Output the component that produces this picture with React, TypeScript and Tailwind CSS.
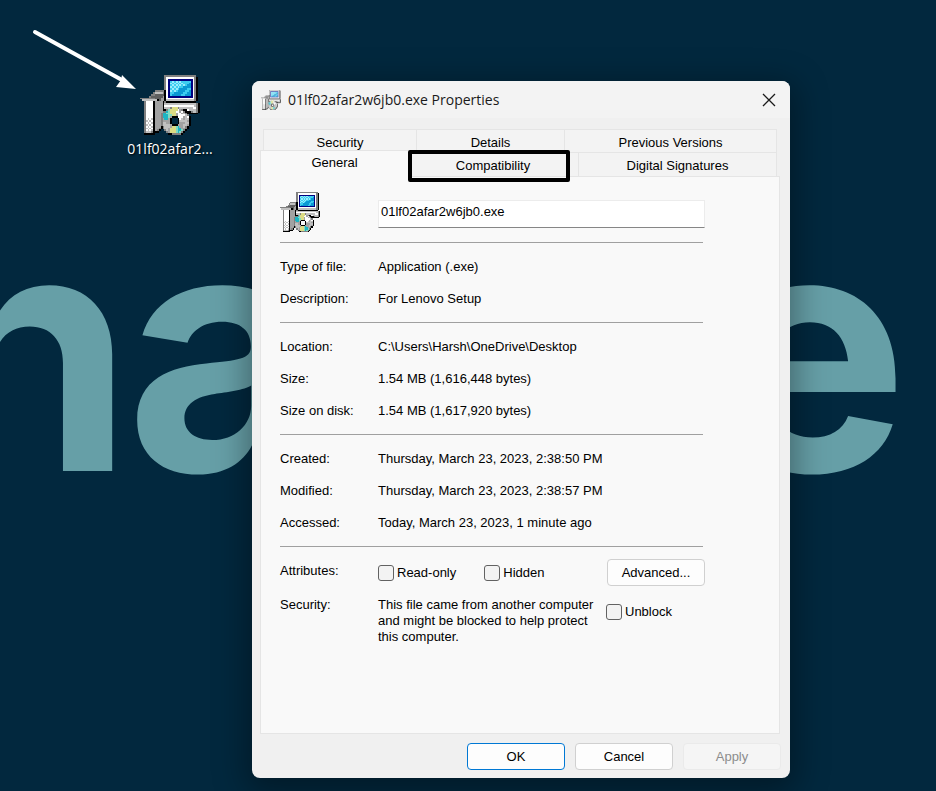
import { useState } from 'react';

const palette: Record<string, string> = {
  g: '#808080',
  d: '#5f5f5f',
  m: '#a2a2a2',
  l: '#c0c0c0',
  w: '#ffffff',
  k: '#000000',
  n: '#000080',
  c: '#1cb4c4',
  a: '#80dcc4',
  y: '#dcdc84',
  s: '#0a98d4',
  t: '#3cccf0',
  u: '#98ecfc',
};

// 32x32 installer icon, one character per pixel
const setupPixels = [
  '.............ggggggggggggggggg..',
  '.............gwwwwwwwwwwwwwwwgk.',
  '.............gwnnnnnnnnnnnnnwgk.',
  '.............gwntutututttttnwgk.',
  '.............gwnututututttsnwgk.',
  '.............gwntututututssnwgk.',
  '.............gwnutututtssssnwgk.',
  '.............gwntututssssttnwgk.',
  '........gggggkwnututssssttsnwgk.',
  '.......gllllgkwnttsssssttssnwgk.',
  '......ggdddddkwntsssssttsssnwgk.',
  '.....gddddddmkwnnnnnnnnnnnnnwgk.',
  'ggggggggdddmmkwwwwwwwwwwwwwwwgk.',
  '.llllllllkdmmklllllllllllllllgk.',
  '..gwwwwkmmmmkgkkkkkkkkkkkkkkkk..',
  '..gwwwwkmmmmklllllllllllllllllgk',
  '..gwwwwkmmmmkwwwwwwwwwwwwwwwwlgk',
  '..gwwwwkmmmmklllgyyyglllllllwwgk',
  '..gwwwwkmmmmkkgayyyywmgkkwllllgk',
  '..gwwwwkmmmmggcayyywwmwgkkkgllgk',
  '..gwwwwkmmmgccaayyymwwmlgkkkkkk.',
  '..gwwwwkmmmgcccaayymwwwwlg......',
  '..gwwwwkmmmgcccamkkkwwwmlwk.....',
  '..gwlwlkmmmgmccmk...kwlmllk.....',
  '..glwlwkmmmgmmmmk...kllllmk.....',
  '..gwlwlkmmmgllmmk...kmmmllk.....',
  '..glwlwkmmmgllllmkkkmmmllmk.....',
  '..gwlwlkmmmkglllmyyacmmlgk......',
  '..glwlwkmmgkgllmyyyaccmmgk......',
  '..gwlwlkmgk..glmyyyaccagk.......',
  '..glllgkkk....gmyyyacagk........',
  '..kkkkkk.......kkgggggk.........',
].map((row) => row.slice(0, 32));

function SetupIcon({ className, smooth = false }: { className: string; smooth?: boolean }) {
  return (
    <svg
      viewBox="0 0 32 32"
      className={className}
      shapeRendering={smooth ? 'geometricPrecision' : 'crispEdges'}
      aria-hidden="true"
    >
      {setupPixels.flatMap((row, y) =>
        row.split('').map((p, x) =>
          palette[p] ? <rect key={`${x}-${y}`} x={x} y={y} width={1} height={1} fill={palette[p]} /> : null
        )
      )}
    </svg>
  );
}

const groups = [
  [
    ['Type of file:', 'Application (.exe)'],
    ['Description:', 'For Lenovo Setup'],
  ],
  [
    ['Location:', 'C:\\Users\\Harsh\\OneDrive\\Desktop'],
    ['Size:', '1.54 MB (1,616,448 bytes)'],
    ['Size on disk:', '1.54 MB (1,617,920 bytes)'],
  ],
  [
    ['Created:', 'Thursday, March 23, 2023, 2:38:50 PM'],
    ['Modified:', 'Thursday, March 23, 2023, 2:38:57 PM'],
    ['Accessed:', 'Today, March 23, 2023, 1 minute ago'],
  ],
];

function CheckOption({ label }: { label: string }) {
  return (
    <label className="flex items-center gap-[3px]">
      <input
        type="checkbox"
        className="size-4 appearance-none rounded-[3px] border border-[#626262] bg-[#f3f3f3] checked:bg-[#0067c0]"
      />
      {label}
    </label>
  );
}

function Divider() {
  return <hr className="mt-[15px] mb-4 w-[423px] border-t border-[#a0a0a0]" />;
}

function Wallpaper() {
  return (
    <div
      aria-hidden="true"
      className="absolute inset-0 overflow-hidden font-['Inter',sans-serif] text-[336px] leading-none font-bold text-[#669fa7] select-none"
    >
      <span className="absolute top-[181px] left-[-76px]">n</span>
      <span className="absolute top-[181px] left-[126px]">a</span>
      <span className="absolute top-[181px] left-[708px]">e</span>
    </div>
  );
}

function Arrow() {
  return (
    <svg viewBox="0 0 110 66" className="absolute top-[27px] left-[30px] w-[110px]" aria-hidden="true">
      <line x1="5" y1="5" x2="92" y2="53" stroke="#fff" strokeWidth="4" strokeLinecap="round" />
      <path d="M106 62 L92 48 L91 53 L86 60 Z" fill="#fff" />
    </svg>
  );
}

function Tabs() {
  const tab = 'border-[#e5e5e5] bg-[#f3f3f3] text-center';
  return (
    <div role="tablist">
      <div className="mx-[3px] flex h-[23px] border-t border-r border-[#e5e5e5]">
        <button role="tab" className={`${tab} w-[153px] border-l pt-1`}>Security</button>
        <button role="tab" className={`${tab} w-[148px] border-l pt-1`}>Details</button>
        <button role="tab" className={`${tab} flex-1 border-l pt-1`}>Previous Versions</button>
      </div>
      <div className="mr-[3px] flex h-6 items-end">
        <button
          role="tab"
          aria-selected="true"
          className="z-10 -mb-px h-[27px] w-[148px] shrink-0 border-t border-l border-[#e5e5e5] bg-[#f9f9f9] pb-[3px]"
        >
          General
        </button>
        <button role="tab" className={`${tab} relative h-6 w-[170px] border-t pt-[3px]`}>
          Compatibility
          <span className="absolute -top-[3px] left-0 z-20 h-8 w-[162px] rounded-[2px] border-4 border-black" />
        </button>
        <button role="tab" className={`${tab} h-6 flex-1 border-t border-r border-l pt-[3px]`}>Digital Signatures</button>
      </div>
    </div>
  );
}

function PropertiesDialog() {
  const [name, setName] = useState('01lf02afar2w6jb0.exe');
  const button = 'h-[27px] w-[98px] rounded-[4px] border bg-[#fdfdfd]';

  return (
    <section
      role="dialog"
      aria-labelledby="title"
      className="absolute top-[81px] left-[252px] w-[538px] overflow-hidden rounded-lg bg-[#f0f0f0] font-['Liberation_Sans',Arial,sans-serif] text-[13px] leading-4 text-black shadow-[0_8px_32px_6px_rgba(0,0,0,0.35)]"
    >
      <header className="flex h-[37px] items-center bg-[#f3f3f3] pr-[14px] pl-[9px]">
        <SetupIcon className="size-5" smooth />
        <h1 id="title" className="ml-[7px] flex-1 font-['Open_Sans',sans-serif] text-[14px] leading-5 text-[#1a1a1a]">
          {name} Properties
        </h1>
        <button aria-label="Close">
          <svg viewBox="0 0 14 14" className="size-[14px]" stroke="#1a1a1a" strokeWidth="1.3">
            <path d="M1 1 L13 13 M13 1 L1 13" />
          </svg>
        </button>
      </header>

      <div className="pt-[11px] pr-[10px] pl-2">
        <Tabs />
        <div role="tabpanel" className="border border-[#e5e5e5] bg-[#f9f9f9] px-[19px] pt-[15px] pb-[88px]">
          <div className="flex items-start">
            <SetupIcon className="size-10" />
            <input
              aria-label="File name"
              value={name}
              onChange={(e) => setName(e.target.value)}
              className="mt-2 ml-[58px] h-7 w-[327px] border border-[#ececec] border-b-[#868686] bg-white px-[2px] pb-[5px] outline-none"
            />
          </div>

          <hr className="mt-[10px] mb-4 w-[423px] border-t border-[#a0a0a0]" />
          {groups.map((rows) => (
            <div key={rows[0][0]}>
              <dl className="grid grid-cols-[98px_1fr] gap-y-4">
                {rows.map(([label, value]) => (
                  <div key={label} className="contents">
                    <dt>{label}</dt>
                    <dd>{value}</dd>
                  </div>
                ))}
              </dl>
              <Divider />
            </div>
          ))}

          <div className="-mt-1 flex w-[425px] items-center">
            <span className="w-[98px] pb-1">Attributes:</span>
            <div className="flex flex-1 gap-7">
              <CheckOption label="Read-only" />
              <CheckOption label="Hidden" />
            </div>
            <button className={`${button} border-[#d0d0d0]`}>Advanced...</button>
          </div>
          <div className="mt-[11px] flex items-start">
            <span className="w-[98px]">Security:</span>
            <p className="w-[228px]">
              This file came from another computer and might be blocked to help protect this computer.
            </p>
            <div className="pt-[7px]">
              <CheckOption label="Unblock" />
            </div>
          </div>
        </div>
      </div>

      <footer className="flex justify-end gap-[10px] pt-[9px] pr-[9px] pb-2">
        <button className={`${button} border-[#0078d4]`}>OK</button>
        <button className={`${button} border-[#d0d0d0]`}>Cancel</button>
        <button disabled className="h-[27px] w-[98px] rounded-[4px] border border-[#eaeaea] bg-[#f5f5f5] text-[#8c8c8c]">
          Apply
        </button>
      </footer>
    </section>
  );
}

export default function App() {
  return (
    <main className="relative min-h-screen overflow-hidden bg-[#02283e]">
      <Wallpaper />
      <button className="absolute top-[75px] left-[120px] flex w-[100px] flex-col items-center">
        <SetupIcon className="size-[60px]" />
        <span className="mt-1 font-['Open_Sans',sans-serif] text-[14px] leading-5 text-white [text-shadow:1px_1px_2px_#000]">
          01lf02afar2...
        </span>
      </button>
      <Arrow />
      <PropertiesDialog />
    </main>
  );
}
